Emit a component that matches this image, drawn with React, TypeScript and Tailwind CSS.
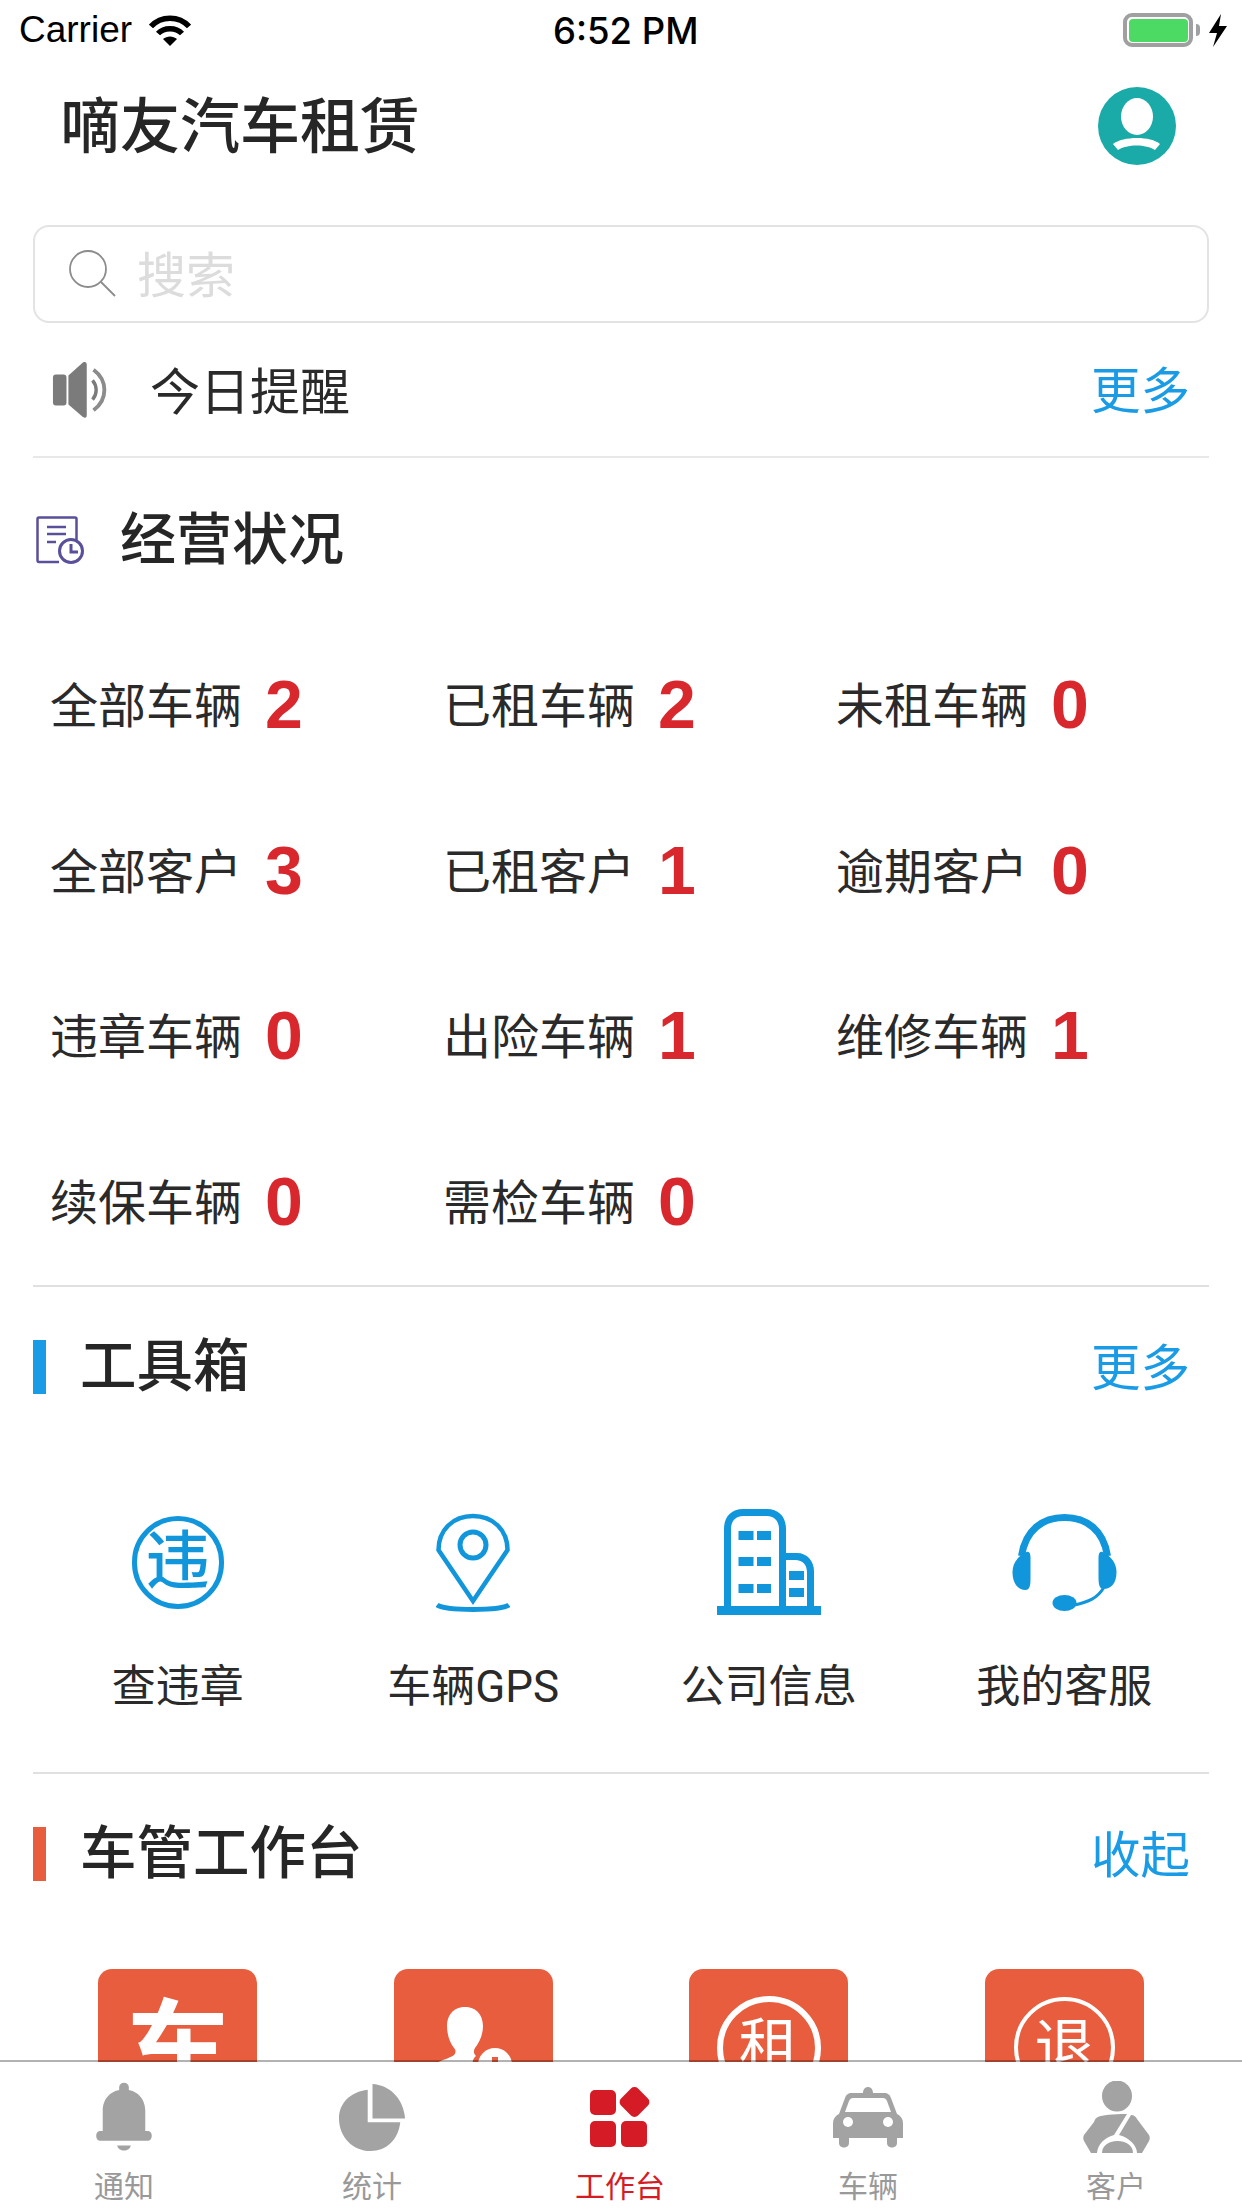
import { ReactNode } from "react";

const cjk = "font-['Roboto','Noto_Sans_CJK_SC',sans-serif]";

function Wifi() {
  return (
    <svg width="42" height="31" viewBox="0 0 42 31" fill="none" stroke="#000">
      <path d="M2 11.500C12 0.500 30 0.500 40 11.500" strokeWidth="5.500" />
      <path d="M9 18.500C15 12 27 12 33 18.500" strokeWidth="5.500" />
      <path d="M14 24L21 31L28 24C24 20.500 18 20.500 14 24Z" fill="#000" stroke="none" />
    </svg>
  );
}

function StatusBar() {
  return (
    <div className="h-[60px] shrink-0 flex items-center justify-between pl-[19px] pr-[15px] relative">
      <div className="flex items-center gap-[17px]">
        <span className="font-['Liberation_Sans',sans-serif] text-[37px] text-black">Carrier</span>
        <Wifi />
      </div>
      <span className="absolute left-[553px] top-[10px] font-['Inter',sans-serif] text-[36.500px] leading-[42px] font-medium text-black">
        6:52 PM
      </span>
      <div className="flex items-center gap-[9px]">
        <div className="flex items-center gap-[3px]">
          <div className="w-[70px] h-[34px] rounded-[9px] border-[4px] border-[#a0a0a0] p-[1.500px]">
            <div className="w-full h-full bg-[#4cd964] rounded-[4px]" />
          </div>
          <div className="w-[4px] h-[12px] bg-[#a0a0a0] rounded-r-[4px]" />
        </div>
        <svg width="18" height="33" viewBox="0 0 18 33" fill="#000">
          <path d="M12 0L0 19H8L4 33L18 12H10Z" />
        </svg>
      </div>
    </div>
  );
}

function TitleRow() {
  return (
    <div className="h-[132px] mb-[33px] shrink-0 flex items-center justify-between pl-[60px] pr-[66px]">
      <h1 className={`${cjk} text-[60px] leading-none font-medium text-[#262626] mt-[3px]`}>嘀友汽车租赁</h1>
      <svg width="78" height="78" viewBox="0 0 78 78">
        <circle cx="39" cy="39" r="39" fill="#1aaba8" />
        <ellipse cx="39" cy="29.500" rx="16" ry="18.500" fill="#fff" />
        <path d="M15 57C25 49 53 49 62 57L57 63C48 57 29 57 20 63Z" fill="#fff" />
      </svg>
    </div>
  );
}

function SearchBox() {
  return (
    <div className="h-[98px] mx-[33px] shrink-0 flex items-center border-2 border-[#e3e3e3] rounded-[16px] pl-[34px]">
      <svg width="48" height="48" viewBox="0 0 48 48" fill="none" stroke="#8c8c8c" strokeWidth="1.800">
        <circle cx="19" cy="19" r="18" />
        <path d="M32 32L46 46" />
      </svg>
      <span className={`${cjk} ml-[20px] pt-[5px] text-[49px] leading-none text-[#dcdcdc]`}>搜索</span>
    </div>
  );
}

function Speaker() {
  return (
    <svg width="56" height="58" viewBox="0 0 58 60">
      <rect x="1" y="14" width="14" height="32" rx="3" fill="#7b7b7b" />
      <path d="M17 15L32 1.500C35 0 36 2 36 4V56C36 58 35 60 32 58L17 45Z" fill="#7b7b7b" />
      <path d="M42 20C47 26 47 34 42 40" fill="none" stroke="#7b7b7b" strokeWidth="3.500" />
      <path d="M43 9C58 20 58 40 43 51" fill="none" stroke="#8c8c8c" strokeWidth="4" />
    </svg>
  );
}

function ReportIcon() {
  return (
    <svg width="48" height="48" viewBox="0 0 48 48" fill="none" stroke="#5a4f9b" strokeWidth="2.500">
      <path d="M23 46H3C2 46 1.500 45 1.500 44V3C1.500 2 2 1.500 3 1.500H39C40 1.500 40.500 2 40.500 3V25" />
      <path d="M11 11H30M11 18H30M11 26H20" />
      <circle cx="35" cy="35" r="11.500" strokeWidth="3" />
      <path d="M35 28V36H42" strokeWidth="3" />
    </svg>
  );
}

function More({ text = "更多" }: { text?: string }) {
  return <span className={`${cjk} pt-[6px] text-[49.500px] leading-none text-[#1a9be6]`}>{text}</span>;
}

function SectionHead({ color, title, more }: { color: string; title: string; more: string }) {
  return (
    <div className="h-[54px] flex items-center pr-[19px]">
      <div className={`w-[13px] h-[54px] ${color}`} />
      <h2 className={`${cjk} ml-[34px] flex-1 text-[56.500px] leading-none font-medium text-[#262626]`}>{title}</h2>
      <More text={more} />
    </div>
  );
}

const stats = [
  ["全部车辆", "2"],
  ["已租车辆", "2"],
  ["未租车辆", "0"],
  ["全部客户", "3"],
  ["已租客户", "1"],
  ["逾期客户", "0"],
  ["违章车辆", "0"],
  ["出险车辆", "1"],
  ["维修车辆", "1"],
  ["续保车辆", "0"],
  ["需检车辆", "0"],
];

function Stats() {
  return (
    <div className="grid grid-cols-[393px_393px_1fr] auto-rows-[82px] gap-y-[83.700px] pl-[17px] mt-[99px]">
      {stats.map(([label, value]) => (
        <div key={label} className="flex items-center">
          <span className={`${cjk} pt-[6px] text-[48px] leading-none text-[#2a2a2a]`}>{label}</span>
          <span className="ml-[23px] font-['Liberation_Sans',sans-serif] text-[68px] leading-none font-bold text-[#d9272e]">
            {value}
          </span>
        </div>
      ))}
    </div>
  );
}

const blue = "#1296db";

function WeiIcon() {
  return (
    <div className="w-[92px] h-[93px] rounded-full border-[5px] border-[#1296db] flex items-center justify-center">
      <span className={`${cjk} text-[64px] leading-none font-medium text-[#1296db]`}>违</span>
    </div>
  );
}

function GpsIcon() {
  return (
    <svg width="74" height="99" viewBox="0 0 74 99" fill="none" stroke={blue}>
      <path d="M37 3C17 3 2.500 17 2.500 37L37 88L71.500 37C71.500 17 57 3 37 3Z" strokeWidth="4.500" />
      <circle cx="37" cy="32" r="13" strokeWidth="5" />
      <path d="M1 92C8 98 66 98 73 92" strokeWidth="5" />
    </svg>
  );
}

function CompanyIcon() {
  return (
    <svg width="104" height="106" viewBox="0 0 104 106" fill={blue}>
      <path d="M7 100V20C7 8 14 0 26 0H50C62 0 69 8 69 20V44H80C90 44 97 52 97 62V100H90V64C90 56 86 51 78 51H69V100H62V20C62 12 57 7 50 7H26C19 7 14 12 14 20V100Z" />
      <rect x="0" y="97" width="104" height="9" />
      <rect x="21.500" y="22" width="15" height="9" />
      <rect x="40" y="22" width="14" height="9" />
      <rect x="21.500" y="48" width="15" height="9" />
      <rect x="40" y="48" width="14" height="9" />
      <rect x="21.500" y="75" width="15" height="9" />
      <rect x="40" y="75" width="14" height="9" />
      <rect x="72" y="62" width="15" height="9" />
      <rect x="72" y="79" width="15" height="9" />
    </svg>
  );
}

function HeadsetIcon() {
  return (
    <svg width="105" height="97" viewBox="0 0 104 97" fill={blue}>
      <path d="M9 42C13 16 30 3.500 52 3.500C74 3.500 91 16 95 42" fill="none" stroke={blue} strokeWidth="7" />
      <path d="M14 38C5 42 0 50 0 58C0 70 6 76 13 76C17 76 18 72 18 64V44C18 40 17 37 14 38Z" />
      <path d="M90 38C99 42 104 50 104 58C104 70 98 75 91 75C87 75 86 71 86 63V44C86 40 87 37 90 38Z" />
      <path d="M91 74C85 84 76 88 62 91" fill="none" stroke={blue} strokeWidth="3" />
      <ellipse cx="52" cy="89" rx="12" ry="8" />
    </svg>
  );
}

const tools: [string, ReactNode][] = [
  ["查违章", <WeiIcon key="a" />],
  ["车辆GPS", <GpsIcon key="b" />],
  ["公司信息", <CompanyIcon key="c" />],
  ["我的客服", <HeadsetIcon key="d" />],
];

function Tools() {
  return (
    <div className="grid grid-cols-4 mt-[112px] -mx-[3px]">
      {tools.map(([label, icon]) => (
        <div key={label} className="flex flex-col items-center">
          <div className="h-[112px] flex items-center justify-center">{icon}</div>
          <span className={`${cjk} mt-[47px] mb-[-3px] text-[44px] leading-none text-[#2a2a2a]`}>{label}</span>
        </div>
      ))}
    </div>
  );
}

function Tile({ children }: { children: ReactNode }) {
  return <div className="w-[159px] h-[160px] rounded-[14px] bg-[#e95d3f] flex justify-center overflow-hidden">{children}</div>;
}

function Workbench() {
  return (
    <div className="grid grid-cols-4 mt-[88px] -mx-[3px] justify-items-center">
      <Tile>
        <span className={`${cjk} mt-[31px] text-[104px] leading-none font-bold text-white`}>车</span>
      </Tile>
      <Tile>
        <svg width="159" height="160" viewBox="0 0 159 160" fill="#fff">
          <path d="M71 38C84 38 89 48 89 57C89 66 85 74 81 79C79 82 80 85 82 87C78 90 78 96 79 100H40V95C48 91 56 89 60 86C62 84 62 81 60 79C56 74 53 66 53 57C53 48 58 38 71 38Z" />
          <circle cx="101" cy="96" r="17" />
          <rect x="98" y="88" width="6" height="12" fill="#e95d3f" />
        </svg>
      </Tile>
      <Tile>
        <div className="mt-[27px] w-[104px] h-[104px] rounded-full border-[6px] border-white flex items-center justify-center shrink-0">
          <span className={`${cjk} text-[60px] leading-none text-white`}>租</span>
        </div>
      </Tile>
      <Tile>
        <div className="mt-[28px] w-[101px] h-[101px] rounded-full border-[4px] border-white flex items-center justify-center shrink-0">
          <span className={`${cjk} text-[60px] leading-none text-white`}>退</span>
        </div>
      </Tile>
    </div>
  );
}

const gray = "#a3a3a3";
const red = "#d51b26";

function BellIcon() {
  return (
    <svg width="58" height="71" viewBox="0 0 60 72" fill={gray}>
      <rect x="25" y="0" width="10" height="12" rx="5" />
      <path d="M8 50V29C8 16 17 7 30 7C43 7 52 16 52 29V50H55C60 50 60 60 55 60H5C0 60 0 50 5 50Z" />
      <path d="M23 65H37C36 72 24 72 23 65Z" />
    </svg>
  );
}

function PieIcon() {
  return (
    <svg width="67" height="67" viewBox="0 0 70 70" fill={gray}>
      <path d="M30 6V40H64C62 58 50 70 33 70C14 70 0 55 0 36C0 20 12 8 30 6Z" />
      <path d="M35 0C52 1 67 14 69 36H35Z" />
    </svg>
  );
}

function GridIcon() {
  return (
    <svg width="60" height="60" viewBox="0 0 60 60" fill={red}>
      <rect x="0" y="3" width="26" height="25" rx="5" />
      <rect x="0" y="34" width="26" height="26" rx="5" />
      <rect x="31" y="34" width="26" height="26" rx="5" />
      <rect x="32.500" y="3" width="24" height="24" rx="5" transform="rotate(45 44.500 15)" />
    </svg>
  );
}

function CarIcon() {
  return (
    <svg width="70" height="61" viewBox="0 0 70 61" fill={gray}>
      <path d="M30 6C30 -2 40 -2 40 6H51C55 6 57 8 58 11L64 27C68 29 70 32 70 37V51H0V37C0 32 2 29 6 27L12 11C13 8 15 6 19 6Z" />
      <path d="M6 50H16V56C16 62 6 62 6 56ZM54 50H64V56C64 62 54 62 54 56Z" />
      <path d="M20 11H50C52 11 53 12 54 14L58 25H12L16 14C17 12 18 11 20 11Z" fill="#fff" />
      <circle cx="15" cy="35" r="5" fill="#fff" />
      <circle cx="55" cy="35" r="5" fill="#fff" />
    </svg>
  );
}

function DriverIcon() {
  return (
    <svg width="67" height="72" viewBox="0 0 67 72" fill={gray}>
      <ellipse cx="34" cy="15" rx="15" ry="15.500" />
      <path d="M15 36C19 34 30 33 44 33L31 54C21 57 15 63 14 72H8L1 60C0 58 0 56 1 54L11 41C12 38 13 37 15 36Z" />
      <path d="M48 34C51 34 53 36 54 38L66 54C67 56 67 58 66 60L59 72H54C54 65 47 57 36 54Z" />
      <path d="M19 72C19 65 25 60 34.500 60C44 60 50 65 50 72Z" />
    </svg>
  );
}

const tabs: [string, ReactNode, boolean][] = [
  ["通知", <BellIcon key="a" />, false],
  ["统计", <PieIcon key="b" />, false],
  ["工作台", <GridIcon key="c" />, true],
  ["车辆", <CarIcon key="d" />, false],
  ["客户", <DriverIcon key="e" />, false],
];

function TabBar() {
  return (
    <div className="h-[148px] -mt-[2px] shrink-0 border-t-[2px] border-black/30 bg-white bg-clip-padding grid grid-cols-5 pr-[2px]">
      {tabs.map(([label, icon, active]) => (
        <div key={label} className="flex flex-col items-center">
          <div className="h-[72px] mt-[19px] flex items-center justify-center">{icon}</div>
          <span className={`${cjk} mt-[18px] text-[30px] leading-[32px] ${active ? "text-[#d51b26]" : "text-[#999999]"}`}>{label}</span>
        </div>
      ))}
    </div>
  );
}

export default function App() {
  return (
    <div className="w-[1242px] h-[2208px] bg-white overflow-hidden flex flex-col">
      <StatusBar />
      <TitleRow />
      <SearchBox />
      <div className="flex-1 overflow-hidden px-[33px]">
        {/* 今日提醒 */}
        <div className="h-[135px] border-b-2 border-[#e8e8e8] flex items-center pl-[19px] pr-[19px]">
          <Speaker />
          <span className={`${cjk} ml-[42px] pt-[6px] flex-1 text-[50px] leading-none text-[#2a2a2a]`}>今日提醒</span>
          <More />
        </div>

        <div className="flex items-center mt-[58px] pl-[3px] h-[48px]">
          <ReportIcon />
          <h2 className={`${cjk} ml-[36px] text-[56px] leading-none font-medium text-[#262626]`}>经营状况</h2>
        </div>
        <Stats />

        <div className="border-t-2 border-[#e0e0e0] mt-[43px] pt-[53px]">
          <SectionHead color="bg-[#1a9be6]" title="工具箱" more="更多" />
          <Tools />
        </div>

        <div className="border-t-2 border-[#e0e0e0] mt-[66px] pt-[53px]">
          <SectionHead color="bg-[#e95d3f]" title="车管工作台" more="收起" />
          <Workbench />
        </div>
      </div>
      <TabBar />
    </div>
  );
}
